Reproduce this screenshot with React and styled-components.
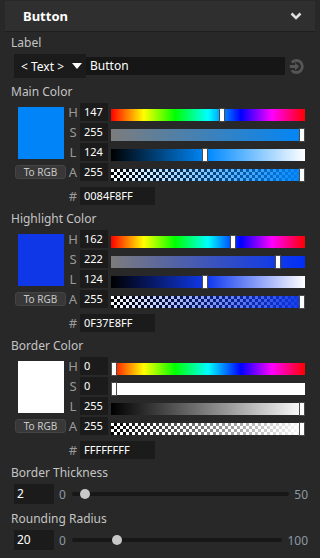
import React from 'react'
import styled, { createGlobalStyle } from 'styled-components'

const GlobalStyle = createGlobalStyle`
  html, body { margin: 0; padding: 0; background: #282828; }
  body { font-family: "Noto Sans", "Open Sans", sans-serif; color: #c4c4c4; }
`

const Panel = styled.div`
  width: 320px;
  height: 558px;
  box-sizing: border-box;
  padding-top: 1px;
  background: #282828;
  overflow: hidden;
`

const Header = styled.div`
  margin: 0 5px;
  height: 30px;
  background: #2f2f2f;
  border-bottom: 1px solid #1e1e1e;
  display: flex;
  align-items: center;
  justify-content: space-between;
  padding: 0 13px 0 18px;
`

const Title = styled.span`
  font-size: 13px;
  font-weight: 700;
  color: #fff;
`

const FieldLabel = styled.div`
  margin: ${p => p.$top || 0}px 0 3px 11px;
  height: 16px;
  line-height: 16px;
  font-size: 12px;
  color: #c4c4c4;
`

const LabelRow = styled.div`
  display: flex;
  align-items: center;
  height: 24px;
  padding-left: 14px;
`

const Dropdown = styled.div`
  width: 72px;
  height: 24px;
  box-sizing: border-box;
  padding: 0 4px 0 7px;
  background: #1b1b1b;
  display: flex;
  align-items: center;
  justify-content: space-between;
  font-size: 12px;
  color: #fff;
`

const Caret = styled.span`
  width: 0;
  height: 0;
  border-left: 5px solid transparent;
  border-right: 5px solid transparent;
  border-top: 6px solid #fff;
`

const TextField = styled.div`
  width: 199px;
  height: 18px;
  line-height: 18px;
  box-sizing: border-box;
  padding-left: 4px;
  background: #161616;
  font-size: 12px;
  color: #fff;
`

const IconSlot = styled.div`
  margin-left: 4px;
  display: flex;
`

const Section = styled.div``

const ColorGrid = styled.div`
  margin-left: 15px;
  display: grid;
  grid-template-columns: 51px 14px 28px 197px;
  grid-template-rows: repeat(4, 18px) 22px;
  row-gap: 2px;
`

const Swatch = styled.div`
  grid-column: 1;
  grid-row: 1 / 4;
  margin: 4px 2px 2px 3px;
  background: ${p => p.$color};
`

const RgbButton = styled.div`
  grid-column: 1;
  grid-row: 4;
  margin-top: 2px;
  height: 14px;
  box-sizing: border-box;
  border: 1px solid #444;
  border-radius: 3px;
  background: #383838;
  font-size: 10px;
  line-height: 12px;
  text-align: center;
  color: #c8c8c8;
`

const Letter = styled.div`
  grid-column: 2;
  font-size: 13px;
  line-height: 18px;
  text-align: center;
  color: #9a9a9a;
`

const NumField = styled.div`
  grid-column: 3;
  background: #1b1b1b;
  font-size: 11px;
  line-height: 18px;
  padding-left: 4px;
  color: #fff;
`

const HexField = styled(NumField)`
  grid-column: 3 / 5;
  align-self: end;
  height: 18px;
  width: 75px;
  box-sizing: border-box;
`

const HashLetter = styled(Letter)`
  align-self: end;
`

const Bar = styled.div`
  grid-column: 4;
  position: relative;
  align-self: end;
  margin-left: 3px;
  width: 194px;
  height: 12px;
  background: ${p => p.$bg};
`

const Handle = styled.div`
  position: absolute;
  top: -1px;
  width: 6px;
  height: 14px;
  box-sizing: border-box;
  border: 1px solid #4a4a4a;
  background: #fff;
`

const SliderRow = styled.div`
  display: flex;
  align-items: center;
  height: 20px;
  padding: 0 12px 0 14px;
`

const NumBox = styled.div`
  width: 40px;
  height: 20px;
  box-sizing: border-box;
  padding-left: 3px;
  background: #1b1b1b;
  font-size: 12px;
  line-height: 20px;
  color: #fff;
`

const RangeText = styled.span`
  font-size: 12px;
  color: #8c98a4;
  margin: 0 6px 0 5px;
`

const Track = styled.div`
  flex: 1;
  position: relative;
  height: 4px;
  border-radius: 2px;
  background: #171717;
`

const Thumb = styled.div`
  position: absolute;
  top: -3px;
  width: 10px;
  height: 10px;
  border-radius: 50%;
  background: #c8c8c8;
`

const HUE = 'linear-gradient(to right, #f00, #ff0 17%, #0f0 33%, #0ff 50%, #00f 67%, #f0f 83%, #f00)'
const CHECKER = 'repeating-conic-gradient(#000 0 25%, #fff 0 50%) 0 0 / 6px 6px'

const colors = [
  { title: 'Main Color', color: '#0084F8', hex: '0084F8FF', h: 147, s: 255, l: 124, a: 255 },
  { title: 'Highlight Color', color: '#0F37E8', hex: '0F37E8FF', h: 162, s: 222, l: 124, a: 255 },
  { title: 'Border Color', color: '#FFFFFF', hex: 'FFFFFFFF', h: 0, s: 0, l: 255, a: 255 },
]

const pos = v => ({ left: `${(v / 255) * 188}px` })

const ColorEditor = ({ c, top }) => {
  const hue = (c.h / 255) * 360
  const sat = (c.s / 255) * 100
  const lig = (c.l / 255) * 100
  const bars = [
    ['H', c.h, HUE],
    ['S', c.s, `linear-gradient(to right, hsl(${hue},0%,${lig}%), hsl(${hue},100%,${lig}%))`],
    ['L', c.l, `linear-gradient(to right, hsl(${hue},${sat}%,0%), hsl(${hue},${sat}%,50%), hsl(${hue},${sat}%,100%))`],
    ['A', c.a, `linear-gradient(to right, ${c.color}00, ${c.color}), ${CHECKER}`],
  ]
  return (
    <Section>
      <FieldLabel $top={top}>{c.title}</FieldLabel>
      <ColorGrid>
        <Swatch $color={c.color} />
        <RgbButton>To RGB</RgbButton>
        {bars.map(([k, v, bg], i) => (
          <React.Fragment key={k}>
            <Letter style={{ gridRow: i + 1 }}>{k}</Letter>
            <NumField style={{ gridRow: i + 1 }}>{v}</NumField>
            <Bar $bg={bg} style={{ gridRow: i + 1 }}>
              <Handle style={pos(v)} />
            </Bar>
          </React.Fragment>
        ))}
        <HashLetter style={{ gridRow: 5 }}>#</HashLetter>
        <HexField style={{ gridRow: 5 }}>{c.hex}</HexField>
      </ColorGrid>
    </Section>
  )
}

const Slider = ({ label, value, max, top }) => (
  <>
    <FieldLabel $top={top}>{label}</FieldLabel>
    <SliderRow>
      <NumBox>{value}</NumBox>
      <RangeText>0</RangeText>
      <Track>
        <Thumb style={{ left: `calc(${(value / max) * 100}% - ${(value / max) * 10}px)` }} />
      </Track>
      <RangeText style={{ marginRight: 0 }}>{max}</RangeText>
    </SliderRow>
  </>
)

const Chevron = () => (
  <svg width="12" height="8" viewBox="0 0 12 8">
    <polyline points="1.5,1.5 6,6 10.5,1.5" fill="none" stroke="#e0e0e0" strokeWidth="2.6" />
  </svg>
)

const GoIcon = () => (
  <svg width="15" height="15" viewBox="0 0 14 14">
    <path d="M2.6 3.4 A5.6 5.6 0 1 1 2.6 10.6" fill="none" stroke="#555" strokeWidth="2.6" />
    <path d="M0.8 5.6 H5.6 V3.2 L9.6 7 L5.6 10.8 V8.4 H0.8 Z" fill="#555" />
  </svg>
)

const App = () => (
  <Panel>
    <GlobalStyle />
    <Header>
      <Title>Button</Title>
      <Chevron />
    </Header>
    <FieldLabel $top={3}>Label</FieldLabel>
    <LabelRow>
      <Dropdown>
        <span>&lt; Text &gt;</span>
        <Caret />
      </Dropdown>
      <TextField>Button</TextField>
      <IconSlot><GoIcon /></IconSlot>
    </LabelRow>
    {colors.map(c => <ColorEditor key={c.title} c={c} top={6} />)}
    <Slider label="Border Thickness" value={2} max={50} top={6} />
    <Slider label="Rounding Radius" value={20} max={100} top={7} />
  </Panel>
)

export default App
